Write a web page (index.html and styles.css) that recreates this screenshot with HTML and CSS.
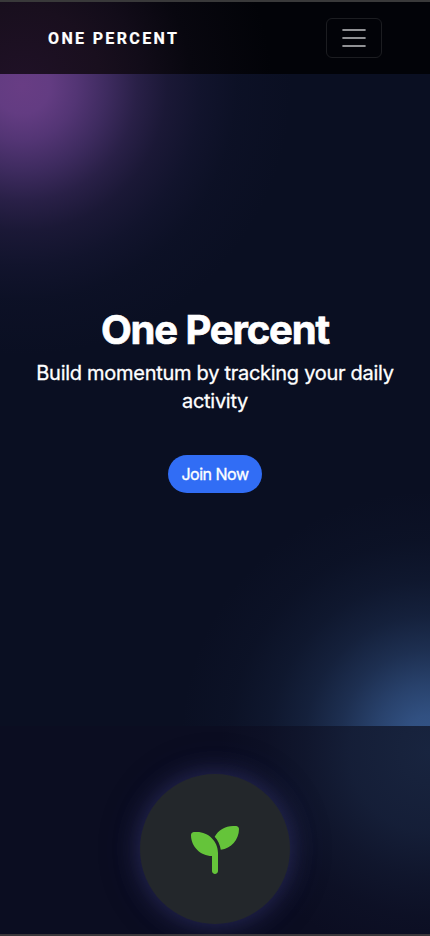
FILE: index.html
```html
<!DOCTYPE html>
<html lang="en">
<head>
<meta charset="utf-8">
<title>One Percent</title>
<link rel="stylesheet" href="styles.css">
</head>
<body>
<div class="page">
  <header class="navbar">
    <a class="brand">ONE PERCENT</a>
    <button class="toggler" aria-label="Menu">
      <svg width="30" height="30" viewBox="0 0 30 30"><path d="M3.4 7h23.2M3.4 15h23.2M3.4 23h23.2" stroke="#909194" stroke-width="2"/></svg>
    </button>
  </header>
  <main class="hero">
    <h1>One Percent</h1>
    <p>Build momentum by tracking your daily activity</p>
    <a class="join">Join Now</a>
  </main>
  <section class="features">
    <div class="badge">
      <svg width="48" height="48" viewBox="0 0 512 512"><path fill="#65c43a" d="M512 32c0 113.6-84.6 207.5-194.2 222c-7.1-53.4-30.6-101.6-65.3-139.3C290.8 46.3 364 0 448 0h32c17.7 0 32 14.3 32 32zM0 96C0 78.3 14.3 64 32 64H64c123.7 0 224 100.3 224 224v32V480c0 17.7-14.3 32-32 32s-32-14.3-32-32V320C100.3 320 0 219.7 0 96z"/></svg>
    </div>
  </section>
</div>
</body>
</html>
```
FILE: styles.css
```css
* { box-sizing: border-box; }
body { margin: 0; background: #0a0f22; color: #fff; font-family: Inter, sans-serif; }
.page { height: 936px; display: flex; flex-direction: column; overflow: hidden; border-top: 2px solid #39393a; border-bottom: 2px solid #39363a; }
.navbar {
  flex: 0 0 72px; padding: 0 48px; display: flex; align-items: center; justify-content: space-between;
  background: radial-gradient(circle at 22px 86px, #201127 0, #190f1e 80px, #120c19 120px, #08070f 170px, #020308 250px);
}
.brand { padding-top: 2px; font: 700 16px/24px Roboto, sans-serif; letter-spacing: 2.35px; -webkit-text-stroke: .2px #fff; }
.toggler { width: 56px; height: 40px; padding: 0; display: flex; align-items: center; justify-content: center; background: none; border: 1px solid #1c1d21; border-radius: 6px; }
.hero {
  flex: 0 0 652px; padding: 232px 24px 0; text-align: center;
  background:
    radial-gradient(circle at 22px 12px, #683d84 0, #633c82 28px, rgba(97,60,132,.84) 55px, rgba(90,58,128,.65) 85px, rgba(82,54,120,.43) 115px, rgba(74,50,112,.26) 145px, rgba(60,46,104,.15) 180px, rgba(50,42,94,.06) 215px, transparent 270px),
    radial-gradient(circle at 430px 666px, #345588 0, rgba(52,85,136,.93) 25px, rgba(52,85,136,.73) 55px, rgba(52,85,136,.46) 90px, rgba(52,85,136,.25) 125px, rgba(52,85,136,.12) 160px, rgba(52,85,136,.04) 200px, transparent 250px),
    #0a0f22;
}
h1 { margin: 0 0 5px; font-size: 40px; line-height: 48px; font-weight: 700; letter-spacing: -1.13px; -webkit-text-stroke: .7px #fff; }
p { margin: 0 0 40px; font-size: 20px; line-height: 28px; letter-spacing: -.28px; -webkit-text-stroke: .3px #fff; }
.join { display: inline-flex; align-items: center; justify-content: center; width: 94px; height: 38px; border-radius: 19px; background: #316df5; font-size: 16px; line-height: 24px; letter-spacing: -.5px; -webkit-text-stroke: .35px #fff; white-space: nowrap; }
.features {
  flex: 1; padding-top: 48px; display: flex; justify-content: center; align-items: flex-start;
  background: radial-gradient(circle at 430px 26px, #18243f 0, #17223c 30px, rgba(24,36,63,.74) 80px, rgba(24,36,63,.38) 125px, rgba(24,36,63,.14) 165px, transparent 210px), #0b0d21;
}
.badge { width: 150px; height: 150px; padding-top: 2px; border-radius: 50%; display: flex; align-items: center; justify-content: center; background: #23272b; box-shadow: 0 0 25px 2px rgba(68,68,140,.45), 0 0 50px rgba(50,48,105,.14); }
```
